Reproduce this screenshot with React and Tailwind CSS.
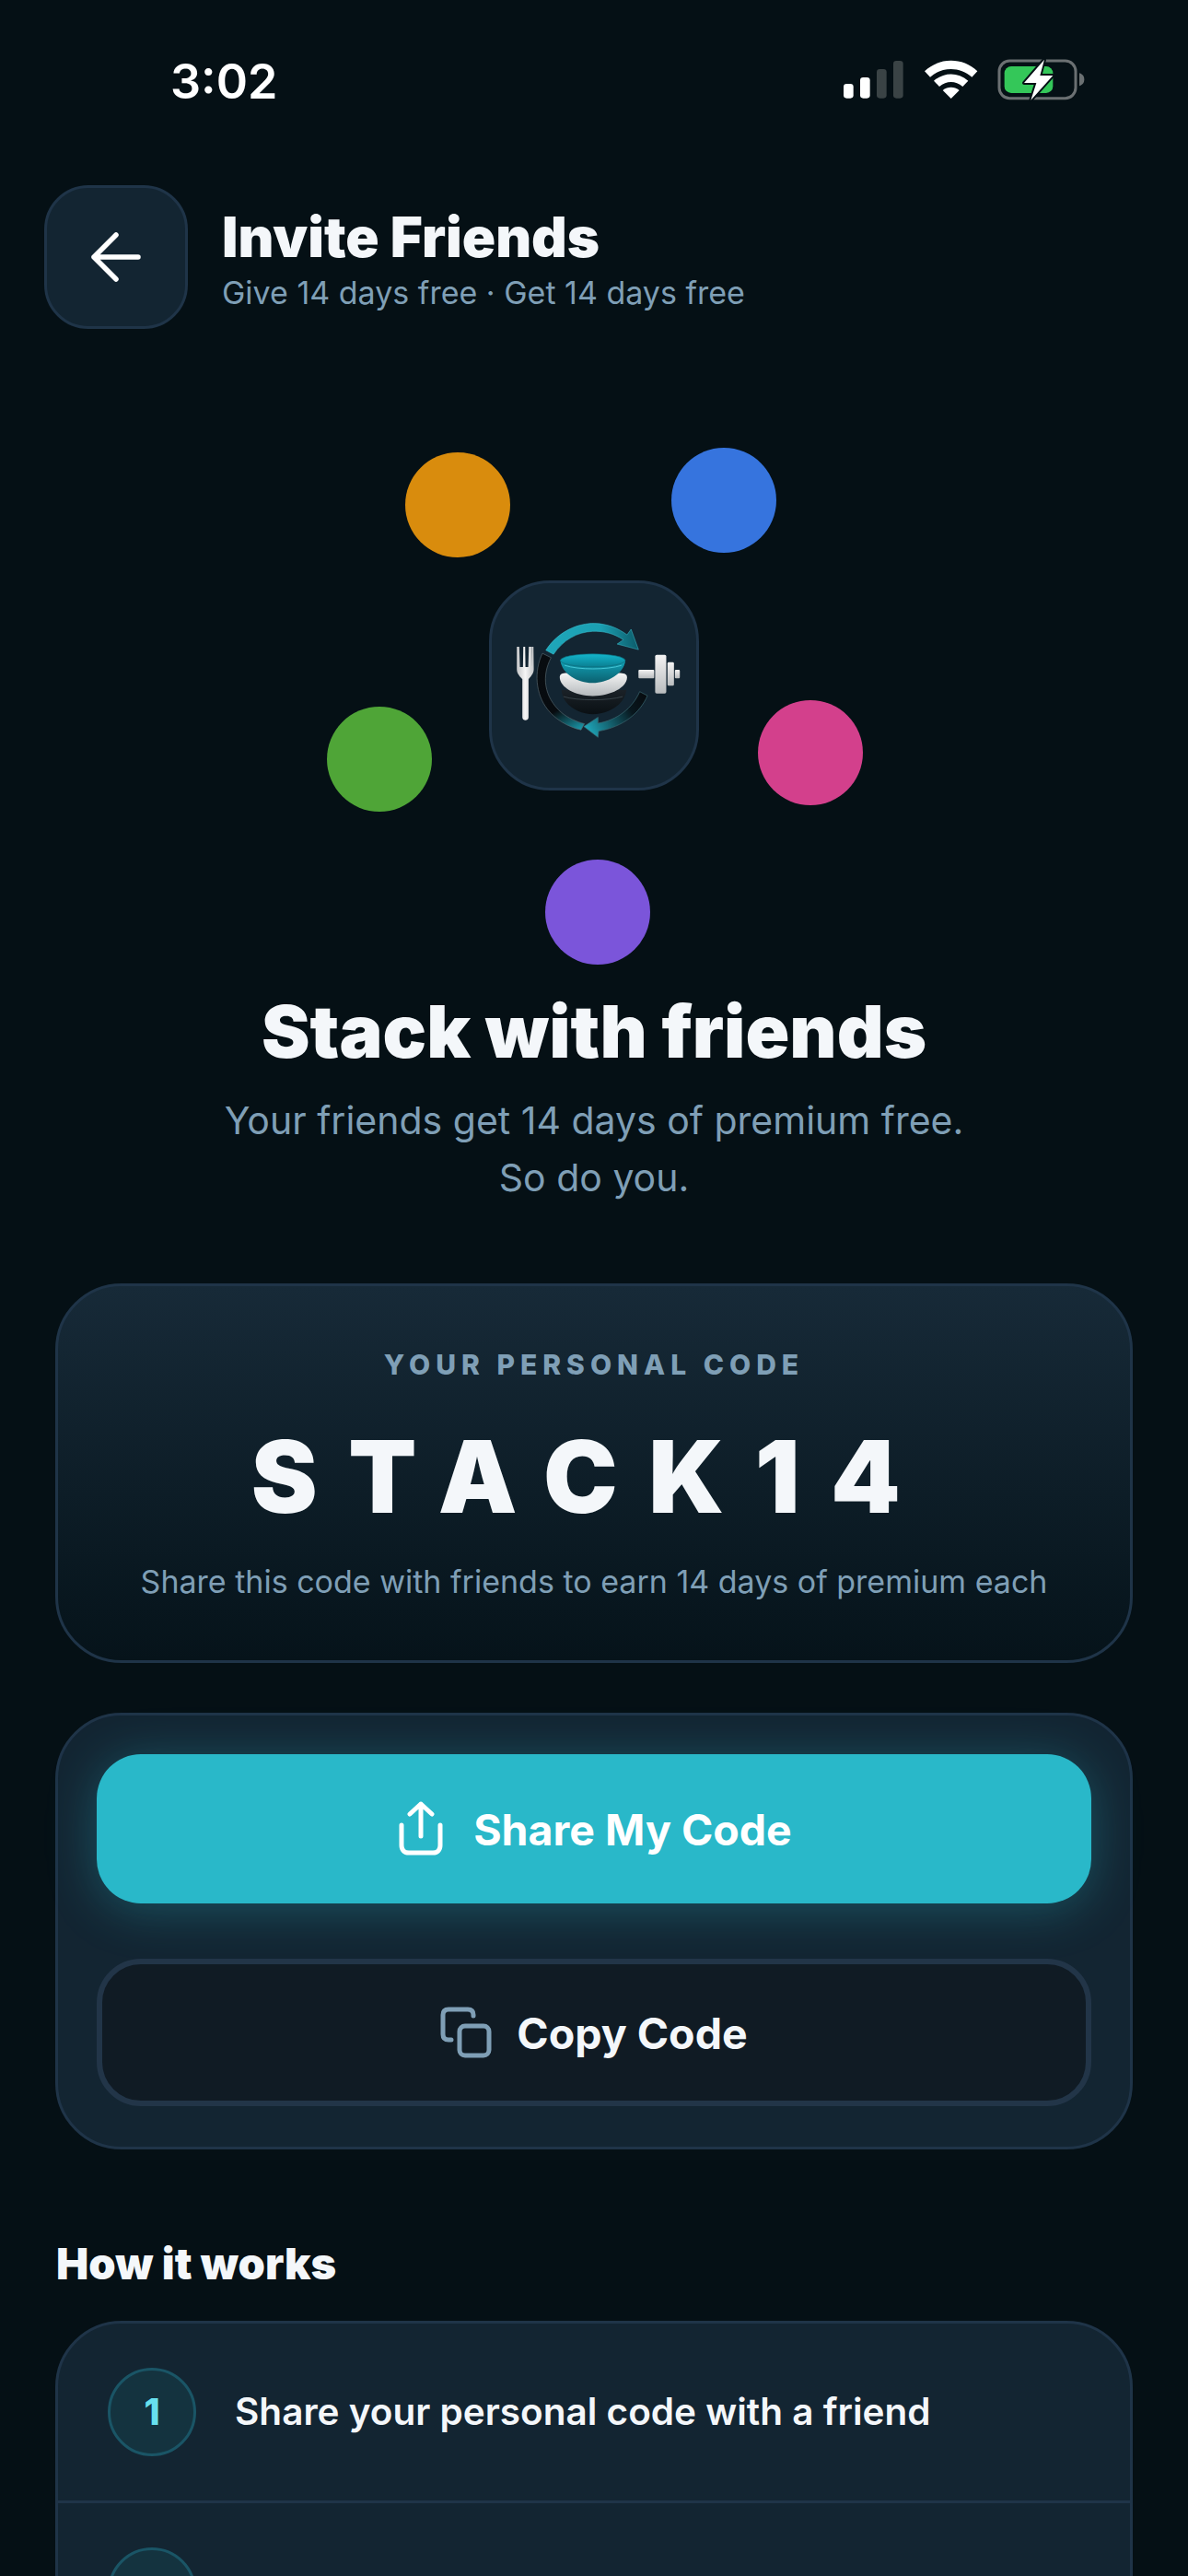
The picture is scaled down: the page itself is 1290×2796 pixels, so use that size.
import React from "react";

function StatusIcons() {
  return (
    <svg width="320" height="100" viewBox="0 0 960 300" fill="none">
      <rect x="108" y="153" width="32" height="47" rx="10" fill="#fff" />
      <rect x="162" y="132" width="32" height="68" rx="10" fill="#fff" />
      <rect x="216" y="105" width="32" height="95" rx="10" fill="#3a4345" />
      <rect x="270" y="78" width="32" height="122" rx="10" fill="#3a4345" />
      <path d="M372 112 C420 66 496 66 544 112 L526 131 C488 96 428 96 390 131 Z" fill="#fff" />
      <path d="M402 143 C436 114 480 114 514 143 L496 162 C472 142 444 142 420 162 Z" fill="#fff" />
      <path d="M431 174 C448 161 468 161 485 174 L458 201 Z" fill="#fff" />
      <rect x="615" y="78" width="249" height="122" rx="34" stroke="#6b7072" strokeWidth="9" />
      <path d="M876 118 C888 122 892 130 892 139 C892 148 888 156 876 160 Z" fill="#6b7072" />
      <rect x="632" y="96" width="158" height="87" rx="22" fill="#34c759" />
      <path d="M762 74 L696 150 L736 150 L718 206 L790 126 L748 126 Z" fill="#fff" stroke="#051015" strokeWidth="12" paintOrder="stroke" strokeLinejoin="round" />
    </svg>
  );
}

function Logo() {
  return (
    <svg width="228" height="228" viewBox="95 92 680 680" fill="none">
      <defs>
        <linearGradient id="arcTop" x1="280" y1="300" x2="580" y2="280" gradientUnits="userSpaceOnUse">
          <stop offset="0" stopColor="#1fa7ba" />
          <stop offset="0.6" stopColor="#1b9fb2" />
          <stop offset="1" stopColor="#0c5a68" />
        </linearGradient>
        <linearGradient id="arcLeft" x1="270" y1="340" x2="400" y2="570" gradientUnits="userSpaceOnUse">
          <stop offset="0" stopColor="#080c10" />
          <stop offset="0.65" stopColor="#070b0f" />
          <stop offset="1" stopColor="#1a98aa" />
        </linearGradient>
        <linearGradient id="arcRight" x1="600" y1="460" x2="410" y2="570" gradientUnits="userSpaceOnUse">
          <stop offset="0" stopColor="#070b0f" />
          <stop offset="0.3" stopColor="#08171e" />
          <stop offset="1" stopColor="#1fa5b8" />
        </linearGradient>
        <linearGradient id="bowl" x1="431" y1="350" x2="431" y2="425" gradientUnits="userSpaceOnUse">
          <stop offset="0" stopColor="#12a3b8" />
          <stop offset="1" stopColor="#0b5f6e" />
        </linearGradient>
        <linearGradient id="rim" x1="431" y1="330" x2="431" y2="372" gradientUnits="userSpaceOnUse">
          <stop offset="0" stopColor="#14b6cc" />
          <stop offset="1" stopColor="#0a7f92" />
        </linearGradient>
        <linearGradient id="plate" x1="431" y1="392" x2="431" y2="466" gradientUnits="userSpaceOnUse">
          <stop offset="0" stopColor="#f4f5f5" />
          <stop offset="1" stopColor="#b5b9bc" />
        </linearGradient>
        <linearGradient id="dark" x1="431" y1="440" x2="431" y2="525" gradientUnits="userSpaceOnUse">
          <stop offset="0" stopColor="#1c2329" />
          <stop offset="1" stopColor="#0a1014" />
        </linearGradient>
        <linearGradient id="metal" x1="0" y1="0" x2="0" y2="1">
          <stop offset="0" stopColor="#f3f3f3" />
          <stop offset="1" stopColor="#b9bcbe" />
        </linearGradient>
        <linearGradient id="metalH" x1="0" y1="0" x2="1" y2="0">
          <stop offset="0" stopColor="#c4c6c8" />
          <stop offset="0.5" stopColor="#f5f5f5" />
          <stop offset="1" stopColor="#c4c6c8" />
        </linearGradient>
      </defs>
      <path d="M279 318 C320 255 385 230 437 231 C480 232 515 248 542 268 L555 250 L579 316 L510 298 L530 284 C500 264 465 255 430 257 C380 259 335 285 304 331 Z" fill="url(#arcTop)" stroke="#3fc3d3" strokeWidth="1.5" />
      <path d="M268 328 L296 342 C265 400 272 470 330 520 C350 537 380 550 404 556 L393 576 C350 566 310 542 285 510 C245 460 240 385 268 328 Z" fill="url(#arcLeft)" stroke="#55666e" strokeWidth="2" />
      <path d="M583 452 L608 465 C585 520 530 566 450 580 L448 600 L402 565 L448 535 L448 554 C510 545 560 505 583 452 Z" fill="url(#arcRight)" stroke="#3c6a74" strokeWidth="2" />
      <path d="M330 447 C332 495 385 525 431 525 C480 525 535 495 540 447 Z" fill="url(#dark)" />
      <path d="M336 468 C380 482 480 482 528 468" stroke="#4a555c" strokeWidth="2" />
      <path d="M324 405 C324 392 340 392 350 392 L515 392 C530 392 542 394 542 406 C542 438 490 466 431 466 C375 466 324 438 324 405 Z" fill="url(#plate)" />
      <path d="M326 350 C330 395 385 425 431 424 C478 424 532 395 537 350 Z" fill="url(#bowl)" />
      <ellipse cx="431" cy="351" rx="105" ry="21" fill="url(#rim)" stroke="#0c6a7a" strokeWidth="2" />
      <path d="M340 367 C385 382 478 382 524 367" stroke="#4fd0df" strokeWidth="2.5" />
      <path d="M185 307 L193 307 L195 372 L205 372 L206 307 L212 307 L213 372 L222 372 L224 307 L232 307 L233 372 L233 307 L239 307 L240 380 C240 395 228 405 223 412 L223 535 C223 548 203 548 203 535 L203 412 C197 405 185 395 185 380 Z" fill="url(#metalH)" />
      <rect x="579" y="381" width="51" height="28" rx="3" fill="url(#metal)" />
      <rect x="633" y="333" width="36" height="125" rx="5" fill="url(#metal)" />
      <rect x="673" y="357" width="21" height="76" rx="4" fill="url(#metal)" />
      <rect x="697" y="381" width="16" height="28" rx="3" fill="url(#metal)" />
    </svg>
  );
}

const dots = [
  "left-[440px] top-[134px] bg-[#d98c0d]",
  "left-[729px] top-[129px] bg-[#3674de]",
  "left-[355px] top-[410px] bg-[#4fa537]",
  "left-[823px] top-[403px] bg-[#d3408c]",
  "left-[592px] top-[576px] bg-[#7b55da]",
];

function ShareIcon() {
  return (
    <svg width="48" height="60" viewBox="0 0 48 60" fill="none" stroke="#fff" strokeWidth="5" strokeLinecap="round" strokeLinejoin="round">
      <path d="M24 38 V3 M12 14 L24 3 L36 14" />
      <path d="M3 26 V48 C3 53 6 56 11 56 H37 C42 56 45 53 45 48 V26" />
    </svg>
  );
}

function CopyIcon() {
  return (
    <svg width="56" height="56" viewBox="0 0 56 56" fill="none" stroke="#7f9fb6" strokeWidth="5" strokeLinecap="round" strokeLinejoin="round">
      <rect x="21" y="21" width="32" height="32" rx="6" />
      <path d="M36 10 V9 C36 5 34 3 30 3 H9 C5 3 3 5 3 9 V30 C3 34 5 36 9 36 H12" />
    </svg>
  );
}

export default function App() {
  return (
    <div className="h-[2796px] w-[1290px] overflow-hidden bg-[#051015] font-['Inter',sans-serif] text-[#f4f7fa]">
      <div className="flex h-[140px] items-end justify-between pl-[185px] pr-[90px]">
        <span className="mb-[25px] text-[52px] leading-[52px] font-semibold text-white">3:02</span>
        <StatusIcons />
      </div>

      <div className="mt-[61px] ml-[48px] flex items-center gap-[37px]">
        <button className="flex h-[156px] w-[156px] items-center justify-center rounded-[48px] border-[3px] border-[#1f3448] bg-[#132532]">
          <svg width="54" height="54" viewBox="0 0 54 54" fill="none" stroke="#fff" strokeWidth="5.5" strokeLinecap="round" strokeLinejoin="round">
            <path d="M51 27 H3 M27 3 L3 27 L27 51" />
          </svg>
        </button>
        <div className="pt-[5px]">
          <div className="text-[60px] leading-[66px] font-black">Invite Friends</div>
          <div className="mt-[7px] text-[34px] leading-[42px] text-[#7f9fb6]">Give 14 days free · Get 14 days free</div>
        </div>
      </div>

      <div className="relative h-[700px]">
        {dots.map((d) => (
          <div key={d} className={`absolute h-[114px] w-[114px] rounded-full ${d}`} />
        ))}
        <div className="absolute top-[273px] left-[531px] flex h-[228px] w-[228px] items-center justify-center rounded-[66px] border-[3px] border-[#1f3448] bg-[#132532]">
          <div className="-m-[3px]"><Logo /></div>
        </div>
      </div>

      <div className="text-center">
        <h1 className="mt-[17px] text-[79px] leading-[90px] font-black">Stack with friends</h1>
        <p className="mt-[21px] text-[41px] leading-[62px] text-[#7f9fb6]">
          Your friends get 14 days of premium free.
          <br />
          So do you.
        </p>
      </div>

      <div className="mx-[60px] mt-[84px] flex h-[412px] flex-col items-center rounded-[72px] border-[3px] border-[#1f3448] bg-gradient-to-b from-[#172a38] to-[#06131a]">
        <div className="mt-[67px] text-[30px] leading-[36px] font-extrabold tracking-[6px] text-[#7f9fb6]">YOUR PERSONAL CODE</div>
        <div className="mt-[44px] pr-[6px] text-[108px] leading-[120px] font-black tracking-[33.5px] text-[#f4f7fa]">STACK14</div>
        <div className="mt-[33px] text-[34px] leading-[42px] text-[#7f9fb6]">Share this code with friends to earn 14 days of premium each</div>
      </div>

      <div className="mx-[60px] mt-[54px] flex h-[474px] flex-col gap-[60px] rounded-[72px] border-[3px] border-[#1f3448] bg-[#132532] p-[42px]">
        <button className="flex h-[162px] items-center justify-center gap-[33px] rounded-[48px] bg-[#29b8c9] pl-[3px] text-[46.5px] font-bold text-white shadow-[0_6px_54px_rgba(41,184,201,0.32)]">
          <ShareIcon />
          <span className="pt-[3px]">Share My Code</span>
        </button>
        <button className="flex h-[160px] items-center justify-center gap-[27px] rounded-[48px] border-[6px] border-[#223548] bg-[#101b24] text-[46.5px] font-bold text-[#f4f7fa]">
          <CopyIcon />
          <span className="pt-[3px]">Copy Code</span>
        </button>
      </div>

      <h2 className="mt-[97px] ml-[61px] text-[47px] leading-[54px] font-black">How it works</h2>

      <div className="mx-[60px] mt-[35px] rounded-[72px] border-[3px] border-[#1f3448] bg-[#132532]">
        <div className="flex h-[195px] items-center gap-[42px] border-b-[3px] border-[#1f3448] pl-[54px]">
          <div className="flex h-[96px] w-[96px] shrink-0 items-center justify-center rounded-full border-[3px] border-[#1a5566] bg-[#14333f] text-[39px] font-extrabold text-[#67e0ee]">1</div>
          <div className="text-[40.5px] font-semibold">Share your personal code with a friend</div>
        </div>
        <div className="flex h-[192px] items-center gap-[42px] pl-[54px]">
          <div className="flex h-[96px] w-[96px] shrink-0 items-center justify-center rounded-full border-[3px] border-[#1a5566] bg-[#14333f] text-[39px] font-extrabold text-[#67e0ee]">2</div>
        </div>
      </div>
    </div>
  );
}
